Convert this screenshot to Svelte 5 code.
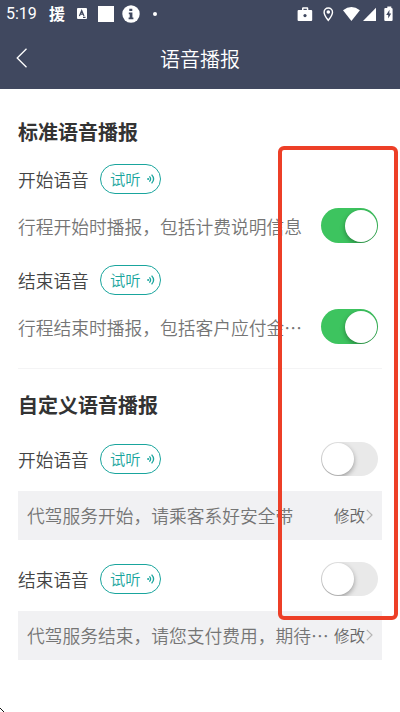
<script>
  let standard = $state([
    { label: '开始语音', text: '行程开始时播报，包括计费说明信息', on: true },
    { label: '结束语音', text: '行程结束时播报，包括客户应付金…', on: true }
  ]);
  let custom = $state([
    { label: '开始语音', text: '代驾服务开始，请乘客系好安全带', on: false },
    { label: '结束语音', text: '代驾服务结束，请您支付费用，期待…', on: false }
  ]);
</script>

{#snippet heading(label)}
  <span class="label">{label}</span>
  <button class="listen">
    <span>试听</span>
    <svg width="8" height="10" viewBox="0 0 8 10" fill="none" stroke="currentColor" stroke-width="1.3">
      <circle cx="1.1" cy="5" r="1" fill="currentColor" stroke="none" />
      <path d="M2.4 2.4Q4.800 5 2.400 7.600M4.600 .600Q8.600 5 4.600 9.400" />
    </svg>
  </button>
{/snippet}

{#snippet toggle(item)}
  <button class="switch" class:on={item.on} role="switch" aria-checked={item.on} aria-label={item.label} onclick={() => (item.on = !item.on)}>
    <span class="knob"></span>
  </button>
{/snippet}

<div class="screen" lang="zh-CN">
  <header>
    <div class="status">
      <span class="time">5:19</span>
      <span class="help">援</span>
      <svg class="abox" width="10" height="11" viewBox="0 0 10 11">
        <rect width="10" height="11" rx="1" fill="#fff" />
        <path d="M2.4 8L4.7 2.6L7 8M3.2 6.2H6.2M6 9.4H8.5" fill="none" stroke="#40485f" stroke-width="1.2" />
      </svg>
      <span class="square"></span>
      <svg class="info" width="18" height="18" viewBox="0 0 18 18">
        <circle cx="9" cy="9" r="8.7" fill="#fff" />
        <path d="M7.300 3.700h3v2.400h-3zM6.800 7.600h3.600v5h1v1.600H6.600v-1.600h1.100V9.200h-.9z" fill="#40485f" />
      </svg>
      <span class="dot"></span>
      <svg class="tray" width="97" height="18" viewBox="0 0 97 18" fill="#fff">
        <path fill-rule="evenodd" d="M1.6 5H5V3.4Q5 2.3 6.1 2.3h4.1q1.1 0 1.1 1.1V5h2.9q1 0 1 1v9q0 1-1 1H1.6q-1 0-1-1V6q0-1 1-1M6.5 5h3.3V3.7H6.5z" />
        <circle cx="8" cy="10.6" r="1.6" fill="#40485f" />
        <path fill-rule="evenodd" d="M31.3 2.2a4.9 4.9 0 0 1 4.9 5c0 3.6-4.9 9.2-4.9 9.2s-4.900-5.600-4.900-9.200a4.900 4.900 0 0 1 4.900-5m0 1.500a3.500 3.500 0 0 0-3.500 3.500c0 2.300 2.200 5.300 3.500 6.900 1.300-1.600 3.500-4.600 3.500-6.900a3.500 3.500 0 0 0-3.500-3.500" />
        <circle cx="31.300" cy="7" r="1.800" />
        <path d="M46 5.200Q54.400-1.200 62.900 5.200L54.400 16z" />
        <path d="M79 2.800V16H66z" />
        <path d="M88.300 3h2V1.500h4V3q1.300 0 1.300 1v11q0 1-1 1h-6.300q-1 0-1-1V4q0-1 1-1" />
        <path d="M92.500 4.800l-3.300 5.100h2v3.600l3-5.100h-1.900z" fill="#40485f" />
      </svg>
    </div>
    <nav>
      <svg class="back" width="12" height="20" viewBox="0 0 12 20" fill="none" stroke="#fff" stroke-width="1.300">
        <path d="M10.500 .700L1.200 10l9.300 9.300" />
      </svg>
      <h1>语音播报</h1>
    </nav>
  </header>

  <main>
    <section class="standard">
      <h2>标准语音播报</h2>
      {#each standard as item}
        <div class="item">
          <div class="row">{@render heading(item.label)}</div>
          <div class="row desc"><p>{item.text}</p>{@render toggle(item)}</div>
        </div>
      {/each}
    </section>
    <section class="custom">
      <h2>自定义语音播报</h2>
      {#each custom as item}
        <div class="item">
          <div class="row">{@render heading(item.label)}{@render toggle(item)}</div>
          <div class="message">
            <p>{item.text}</p>
            <button class="edit">
              修改
              <svg width="7" height="12" viewBox="0 0 7 12" fill="none" stroke="#b5b5b5" stroke-width="1.2"><path d="M.800 .800L6 6L.800 11.200" /></svg>
            </button>
          </div>
        </div>
      {/each}
    </section>
  </main>
  <div class="highlight"></div>
  <svg class="pointer" width="5" height="5" viewBox="0 0 5 5" fill="#111"><path d="M0 1h1v1H0zM1 2h1v1H1zM2 3h1v1H2zM3 4h1v1H3z" /></svg>
</div>

<style>
  :global(body) { margin: 0; background: #fff; }
  .screen {
    position: relative; width: 400px; height: 712px; overflow: hidden; background: #fff;
    font-family: "Noto Sans CJK SC", sans-serif; font-weight: 350; color: #444;
  }
  button { border: 0; padding: 0; margin: 0; background: none; font: inherit; color: inherit; }
  h1, h2, p { margin: 0; font-weight: 350; white-space: nowrap; }
  svg { display: block; flex: none; }
  header { height: 89px; background: #40485f; color: #fff; }
  .status { display: flex; align-items: center; height: 27px; padding: 0 7px 0 6px; }
  .time { width: 43px; font: 400 16px/27px Roboto, sans-serif; }
  .help { width: 28px; font-size: 16px; line-height: 27px; font-weight: 700; height: 27px; }
  .square { width: 16px; height: 16px; margin-left: 11px; background: #fff; }
  .info { margin-left: 8px; }
  .dot { width: 4px; height: 4px; margin-left: 13px; border-radius: 50%; background: #fff; }
  .tray { margin-left: auto; margin-right: -1px; }
  nav { display: flex; align-items: center; height: 62px; padding: 0 16px; }
  .back { width: 12px; }
  h1 { flex: 1; padding: 2px 12px 0 0; text-align: center; font-size: 20px; line-height: 30px; }
  main { padding: 0 18px; }
  h2 { height: 30px; font-size: 20px; line-height: 30px; font-weight: 700; color: #333; }
  .row { display: flex; align-items: center; height: 30px; }
  .label { width: 82px; font-size: 17.700px; line-height: 30px; white-space: nowrap; }
  .listen {
    display: flex; align-items: center; box-sizing: border-box; width: 61px; height: 30px; padding-left: 9px;
    border: 1.500px solid #19a59d; border-radius: 15px; color: #19a59d; font-size: 15.300px; line-height: 28px;
  }
  .listen span { padding-bottom: 2px; }
  .listen svg { margin-left: 6px; }
  .standard { height: 251px; padding-top: 28px; border-bottom: 1px solid #f4f4f5; }
  .standard .item { height: 101px; }
  .standard h2 { margin-bottom: 17px; }
  .desc { height: 35px; margin-top: 14px; justify-content: space-between; margin-right: 4px; }
  .desc p, .message p { font-size: 17.750px; line-height: 30px; color: #757575; }
  .message p { padding-bottom: 1px; }
  .switch { display: block; flex: none; width: 57px; height: 35px; padding: 2px 1px; border-radius: 18px; background: #e9e9e9; overflow: hidden; }
  .knob { display: block; width: 32px; height: 32px; border-radius: 50%; background: #fff; box-shadow: 0 2px 5px rgba(0, 0, 0, .35); }
  .switch.on { background: #3dc45f; }
  .switch.on .knob { margin-left: 23px; }
  .custom { padding-top: 21px; }
  .custom h2 { margin-bottom: 24px; }
  .custom .row { margin-right: 4px; }
  .custom .switch { height: 34px; margin-left: auto; padding-top: 1px; }
  .custom .item { height: 120px; }
  .message { display: flex; align-items: center; justify-content: space-between; height: 49px; margin-top: 17px; padding: 0 9px; background: #f1f1f3; }
  .edit { display: flex; align-items: center; gap: 1px; padding-bottom: 1px; font-size: 15.500px; line-height: 30px; color: #666; white-space: nowrap; }
  .highlight { position: absolute; left: 278px; top: 146px; width: 112px; height: 466px; border: 4px solid #ed3f27; border-radius: 6px; }
  .pointer { position: absolute; left: 0; bottom: 0; }
</style>
